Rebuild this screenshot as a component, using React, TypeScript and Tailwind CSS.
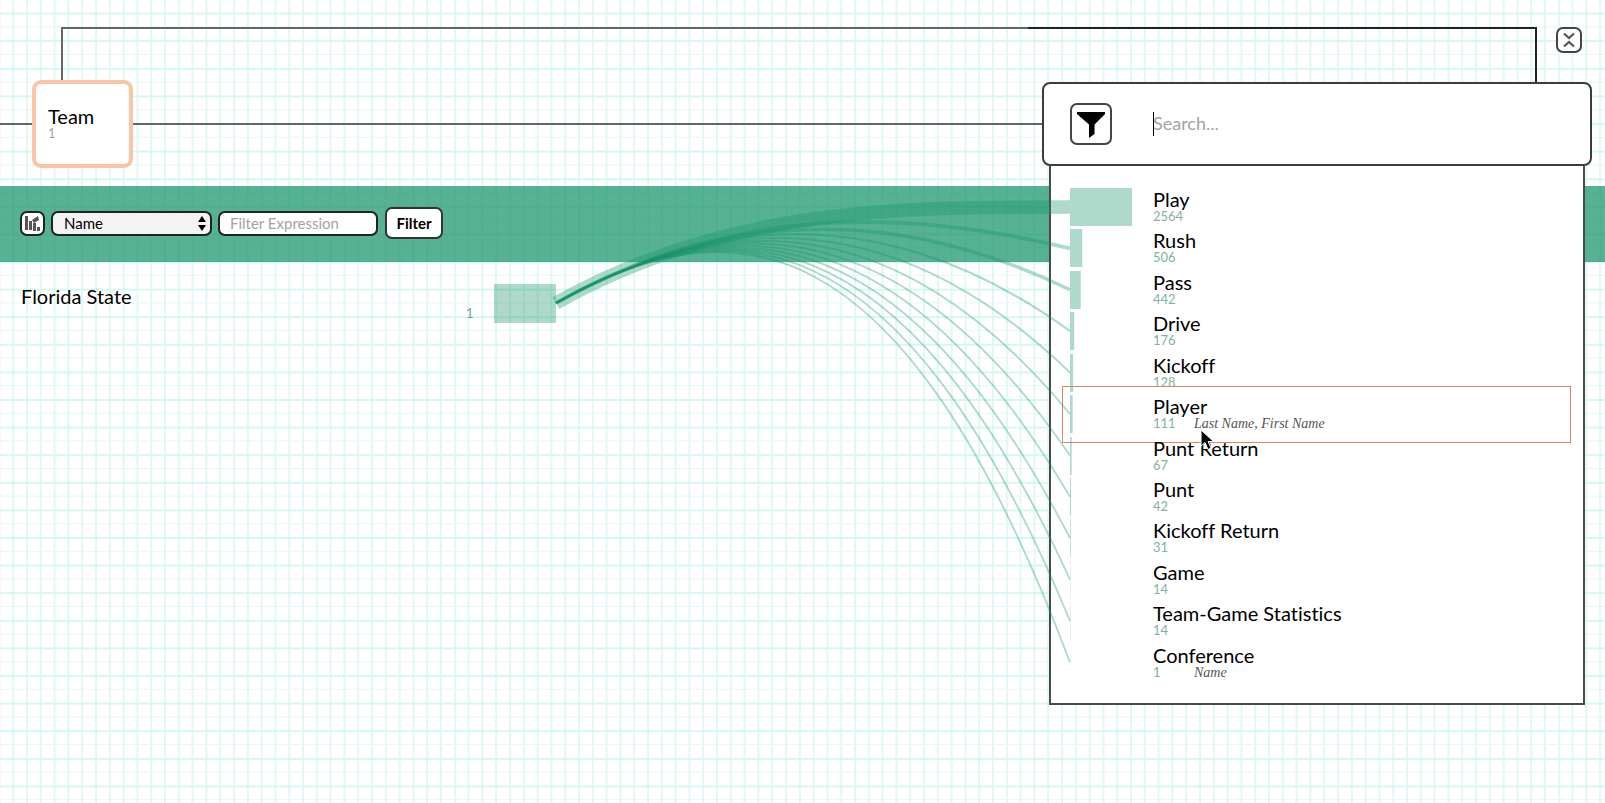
import React from "react";

type Entity = { name: string; count: number; fields?: string; active?: boolean };

const entities: Entity[] = [
  { name: "Play", count: 2564 },
  { name: "Rush", count: 506 },
  { name: "Pass", count: 442 },
  { name: "Drive", count: 176 },
  { name: "Kickoff", count: 128 },
  { name: "Player", count: 111, fields: "Last Name, First Name", active: true },
  { name: "Punt Return", count: 67 },
  { name: "Punt", count: 42 },
  { name: "Kickoff Return", count: 31 },
  { name: "Game", count: 14 },
  { name: "Team-Game Statistics", count: 14 },
  { name: "Conference", count: 1, fields: "Name" },
];

const MAX = 2564;
const BAR = 62;

function GraphPaper() {
  return (
    <svg className="pointer-events-none absolute inset-0 h-full w-full" aria-hidden="true">
      <defs>
        <pattern id="paper" x="-0.6" y="-0.2" width="27.6" height="27.6" patternUnits="userSpaceOnUse">
          <path d="M13.9 0V27.6M27.6 0V27.6M0 0V27.6" stroke="#daf7f2" strokeWidth="1.6" />
          <path d="M0 27.4H27.6" stroke="#e4f8f4" strokeWidth="1.6" />
          <path d="M0 13.8H27.6" stroke="#d0f8f2" strokeWidth="1.8" />
        </pattern>
      </defs>
      <rect width="100%" height="100%" fill="url(#paper)" />
    </svg>
  );
}

function Links() {
  return (
    <svg
      className="pointer-events-none absolute top-[207px] right-[535px] left-[556px] h-[456px] w-[calc(100%-1091px)] overflow-visible"
      viewBox="0 0 514 456"
      preserveAspectRatio="none"
      fill="none"
      stroke="#16936a"
      strokeOpacity="0.35"
      aria-hidden="true"
    >
      {entities.map((e, i) => (
        <path
          key={e.name}
          d={`M0 96C171 0 343 0 514 ${i * 41.4}`}
          strokeWidth={Math.max(1.8, 1.3 + (e.count / MAX) * 12.2)}
          vectorEffect="non-scaling-stroke"
        />
      ))}
    </svg>
  );
}

function EntityRow({ entity }: { entity: Entity }) {
  return (
    <li className="relative">
      {entity.active && (
        <span className="pointer-events-none absolute -top-[9px] right-[12px] -left-[8px] h-[57px] border border-[#e5845f]" />
      )}
      <button type="button" className="grid w-full grid-cols-[83px_1fr] text-left">
        <svg className="h-[38px] w-[62px]" viewBox="0 0 62 38" fill="#16936a" fillOpacity="0.35" aria-hidden="true">
          <rect width={(entity.count / MAX) * BAR} height="38" />
        </svg>
        <span className="flex flex-col">
          <span className="text-[20px] leading-[22px] text-black">{entity.name}</span>
          <span className="flex items-baseline text-[13px] leading-[12px] text-[#7fb3a0]">
            <span className="w-[41px]">{entity.count}</span>
            {entity.fields && (
              <span className="font-['Liberation_Serif',serif] text-[14px] text-[#555] italic">{entity.fields}</span>
            )}
          </span>
        </span>
      </button>
    </li>
  );
}

export default function App() {
  return (
    <main className="relative min-h-screen overflow-hidden bg-white font-['Lato',sans-serif] text-black [font-variant-ligatures:none]">
      <GraphPaper />

      <div className="absolute top-[27px] right-[68px] left-[61px] h-[56px] border-t-2 border-r-2 border-l-2 border-[#666] border-r-[#222]" />
      <div className="absolute top-[27px] right-[68px] h-[2px] w-[509px] bg-[#222]" />
      <div className="absolute top-[123px] right-[100px] left-0 h-[2px] bg-[#5c6b69]" />

      <header className="relative flex h-[186px] items-start justify-between pt-[27px] pr-[23px] pl-[32px]">
        <section className="mt-[53px] flex h-[88px] w-[101px] flex-col justify-center rounded-[9px] border-4 border-[#fbc5a3] bg-white px-[12px] pb-[2px]">
          <h1 className="text-[20px] leading-[20px]">Team</h1>
          <p className="text-[13px] leading-[14px] text-[#8fa8a0]">1</p>
        </section>
        <button type="button" aria-label="Collapse" className="grid size-[26px] place-items-center rounded-[7px] border-2 border-[#444] bg-white">
          <svg className="h-[16px] w-[12px]" viewBox="0 0 12 16" fill="none" stroke="#555" strokeWidth="2.2">
            <path d="M1 1.5L6 6L11 1.5M1 14.5L6 10L11 14.5" />
          </svg>
        </button>
      </header>

      <form className="relative flex h-[76px] items-center bg-[#16936a]/72 pb-[2px] pl-[20px]" onSubmit={(e) => e.preventDefault()}>
        <button type="button" aria-label="Chart" className="grid size-[25px] place-items-center rounded-[7px] border-2 border-[#222] bg-white">
          <svg className="size-[17px]" viewBox="0 0 17 17" fill="#555">
            <path d="M1 1h3v14H1zM5 6h3v9H5zM9 8h3v8H9zM13 12h3v4h-3z" />
            <path d="M8 5L14 1L15 5L10 8Z" />
          </svg>
        </button>
        <div className="relative ml-[6px]">
          <select aria-label="Field" className="block h-[25px] w-[161px] appearance-none rounded-[7px] border-2 border-[#222] bg-[#f3f3f3] pl-[11px] text-[15px] leading-[20px]">
            <option>Name</option>
          </select>
          <svg className="pointer-events-none absolute top-[5px] right-[6px] h-[15px] w-[8px]" viewBox="0 0 8 15">
            <path d="M4 0L8 6H0ZM4 15L8 9H0Z" />
          </svg>
        </div>
        <input aria-label="Filter expression" placeholder="Filter Expression" className="ml-[6px] h-[25px] w-[160px] rounded-[7px] border-2 border-[#222] bg-white pl-[10px] text-[15px] placeholder:text-[#a3a3a3]" />
        <button type="submit" className="ml-[7px] h-[32px] w-[58px] rounded-[7px] border-2 border-[#333] bg-white text-[15px] font-bold">
          Filter
        </button>
      </form>

      <section className="relative flex pt-[22px] pl-[21px]">
        <h2 className="w-[445px] text-[20px] leading-[24px]">Florida State</h2>
        <span className="w-[28px] pt-[20px] text-[13px] leading-[18px] text-[#7f9f95]">1</span>
        <span className="h-[39px] w-[62px] bg-[#16936a]/35" />
      </section>

      <aside className="absolute top-[82px] right-[13px] w-[550px]">
        <div className="relative flex h-[84px] items-center rounded-[8px] border-2 border-[#3c3c3c] bg-white pl-[26px]">
          <button type="button" aria-label="Toggle filter" className="grid size-[42px] place-items-center rounded-[7px] border-2 border-[#444] bg-white">
            <svg className="size-[30px]" viewBox="0 0 30 30">
              <path d="M1 3H29V5L18.500 15.500V25L13 29V15.500L1 5Z" />
            </svg>
          </button>
          <div className="relative ml-[41px] flex-1 pr-6">
            <input aria-label="Search" placeholder="Search..." className="w-full bg-transparent text-[18px] leading-[22px] outline-none placeholder:text-[#a3a3a3]" />
            <span className="absolute inset-y-0 left-0 w-px bg-black" />
          </div>
        </div>
        <div className="mx-[7px] border-2 border-t-0 border-[#4a4a4a] bg-white pt-[22px] pb-[18px] pl-[19px]">
          <ul className="grid h-[497px] auto-rows-fr">
            {entities.map((e) => (
              <EntityRow key={e.name} entity={e} />
            ))}
          </ul>
        </div>
      </aside>

      <Links />

      <svg className="pointer-events-none absolute top-[429px] right-[389px] h-[22px] w-[16px]" viewBox="0 0 16 22" stroke="#fff" aria-hidden="true">
        <path d="M1 1V17L5 13.5L8 20.5L11 19L8 12.5H13.5Z" />
      </svg>
    </main>
  );
}
